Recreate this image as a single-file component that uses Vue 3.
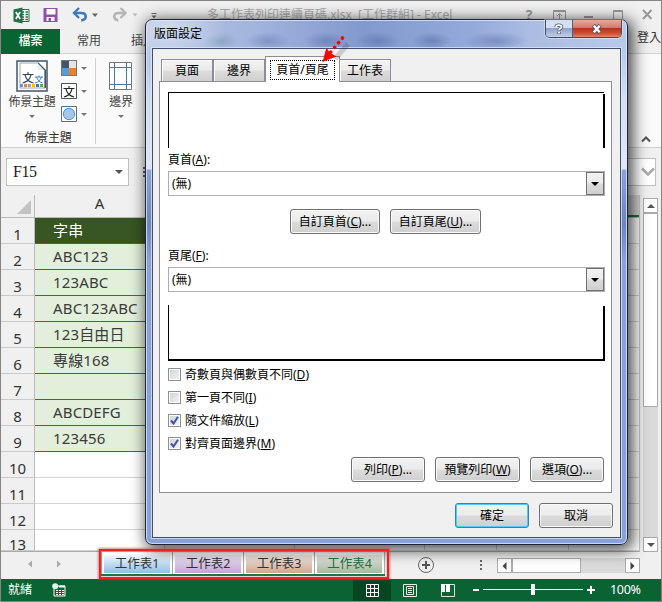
<script setup>
const rows = [
  { n: 1, text: '字串', kind: 'head' },
  { n: 2, text: 'ABC123', kind: 'data' },
  { n: 3, text: '123ABC', kind: 'data' },
  { n: 4, text: 'ABC123ABC', kind: 'data' },
  { n: 5, text: '123自由日', kind: 'data' },
  { n: 6, text: '專線168', kind: 'data' },
  { n: 7, text: '', kind: 'data' },
  { n: 8, text: 'ABCDEFG', kind: 'data' },
  { n: 9, text: '123456', kind: 'data' },
  { n: 10, text: '', kind: '' },
  { n: 11, text: '', kind: '' },
  { n: 12, text: '', kind: '' },
  { n: 13, text: '', kind: 'tail' },
]
const sheets = [
  { name: '工作表1', tone: 'blue' },
  { name: '工作表2', tone: 'purple' },
  { name: '工作表3', tone: 'orange' },
  { name: '工作表4', tone: 'green' },
]
const checks = [
  { label: '奇數頁與偶數頁不同', key: 'D', on: false },
  { label: '第一頁不同', key: 'I', on: false },
  { label: '隨文件縮放', key: 'L', on: true },
  { label: '對齊頁面邊界', key: 'M', on: true },
]
</script>

<template>
  <div class="excel">
    <header class="titlebar">
      <svg class="quick" width="150" height="28" viewBox="0 0 150 28">
        <path d="M16 8.500h9.500v12H16z" fill="#fff" stroke="#1e7145" />
        <path d="M18 11h2.500M22 11h2.500M18 13.500h2.500M22 13.500h2.500M18 16h2.500M22 16h2.500M18 18.500h2.500M22 18.500h2.500" stroke="#1e7145" stroke-width="1.300" />
        <path d="M10 8.500l9-2v16l-9-2z" fill="#1e7145" />
        <path d="M12.300 11l4.400 7M16.700 11l-4.400 7" stroke="#fff" stroke-width="1.600" />
        <path d="M40 7h14v14H40z" fill="#8d52a8" />
        <path d="M43 8h9v5.500h-9zM43 16h8v4h-8z" fill="#fff" />
        <path d="M45 17h2.500v3H45z" fill="#8d52a8" />
        <path d="M71 12h7c3 0 4.200 1.700 4.200 3.500 0 2.200-2 3.500-4.500 4" fill="none" stroke="#3f7ab8" stroke-width="2.600" />
        <path d="M75.500 7l-5 5 5 5" fill="none" stroke="#3f7ab8" stroke-width="2.400" />
        <path d="M88.500 12.500h6l-3 3.500z" fill="#666" />
        <path d="M121 12h-6c-3 0-4.200 1.700-4.200 3.500 0 2.200 1.700 3.500 4 4" fill="none" stroke="#b5b5b5" stroke-width="2.600" />
        <path d="M117 7l5 5-5 5" fill="none" stroke="#b5b5b5" stroke-width="2.400" />
        <path d="M129 12.500h5l-2.500 3z" fill="#bbb" />
        <path d="M148 12.500h5" stroke="#666" /><path d="M148 14.500h5l-2.500 3z" fill="#666" />
      </svg>
      <div class="doc">多工作表列印連續頁碼.xlsx&nbsp; [工作群組] - Excel</div>
      <div class="help">?</div>
      <svg class="controls" width="104" height="28" viewBox="0 0 104 28">
        <path d="M2.500 9.500h12v9h-12zM2 10.500h13M8.500 18v-5M6 15l2.500-2.500L11 15" fill="none" stroke="#999" />
        <path d="M33 15h9v2h-9z" fill="#999" />
        <path d="M62.500 9.500h9v9h-9zM62 10.500h10" fill="none" stroke="#999" />
        <path d="M92 9l8.500 9M100.500 9L92 18" stroke="#999" stroke-width="2" />
      </svg>
    </header>

    <nav class="tabs">
      <span class="file">檔案</span>
      <span class="tab home">常用</span>
      <span class="tab insert">插入</span>
      <span class="signin">登入</span>
    </nav>

    <section class="ribbon">
      <div class="group">
        <div class="tools">
          <div class="big themes">
            <svg width="32" height="32" viewBox="0 0 32 32">
              <path d="M1 1h30v30H1z" fill="#fff" stroke="#44546a" stroke-width="1.500" />
              <path d="M4 3h18l7 7v18H4z" fill="#fff" stroke="#9aa5b3" />
              <path d="M22 2l8 8v18h-1.500V10H22z" fill="#44546a" />
              <path d="M22 3.500V10h6z" fill="#e7ebf0" />
              <path d="M6.500 14.500h11M12 12v2.500M15 15c-1 4-4 7-8.500 8M9 15c1 4 4 7 8.500 8" fill="none" stroke="#34445a" stroke-width="1.100" />
              <path d="M19 17h8M23 15.500V17M25.500 17c-1 3-3 5-6.500 6M20.500 17c1 3 3 5 6 6" fill="none" stroke="#3e7dbb" />
              <path d="M4 24h3v3H4z" fill="#5b9bd5" /><path d="M8 24h3v3H8z" fill="#ed7d31" /><path d="M12 24h3v3h-3z" fill="#a5a5a5" /><path d="M16 24h3v3h-3z" fill="#ffc000" /><path d="M20 24h3v3h-3z" fill="#4472c4" /><path d="M24 24h3v3h-3z" fill="#70ad47" />
            </svg>
            <span class="cap">佈景主題</span>
            <i class="caret"></i>
          </div>
          <div class="minis">
            <div class="mini">
              <svg width="16" height="16" viewBox="0 0 16 16"><path d="M0 0h16v16H0z" fill="#777" /><path d="M1 1h7v7H1z" fill="#44546a" /><path d="M8 1h7v7H8z" fill="#e7e6e6" /><path d="M1 8h7v7H1z" fill="#5b9bd5" /><path d="M8 8h7v7H8z" fill="#ed7d31" /></svg>
              <i class="caret"></i>
            </div>
            <div class="mini">
              <svg width="16" height="16" viewBox="0 0 16 16"><path d="M.5.500h15v15H.5z" fill="#fff" stroke="#44546a" /><path d="M2.500 5.500h11M8 3v2.500M11 6c-1 4-4 7-8 8M5 6c1 4 4 7 8 8" fill="none" stroke="#222" stroke-width="1.100" /></svg>
              <i class="caret"></i>
            </div>
            <div class="mini">
              <svg width="16" height="16" viewBox="0 0 16 16"><path d="M.5.500h15v15H.5z" fill="#fff" stroke="#5a6b84" /><circle cx="8" cy="8" r="5.700" fill="#a5c5e9" stroke="#5b8fc9" /></svg>
              <i class="caret"></i>
            </div>
          </div>
        </div>
        <div class="group-name">佈景主題</div>
      </div>
      <div class="big margins">
        <svg width="24" height="29" viewBox="0 0 24 29"><path d="M.5.500h22v27H.5z" fill="#fff" stroke="#777" /><path d="M5.500 1v26M17.500 1v26M1 5.500h21M1 22.500h21" stroke="#3f7ab8" /></svg>
        <span class="cap">邊界</span>
        <i class="caret"></i>
      </div>
      <svg class="collapse" width="10" height="7" viewBox="0 0 10 7"><path d="M1 5.500l4-4 4 4" fill="none" stroke="#555" stroke-width="2" /></svg>
    </section>

    <section class="formula">
      <div class="namebox"><span>F15</span><i class="caret dark"></i></div>
      <div class="dots"><b></b><b></b><b></b></div>
      <div class="fx"><svg width="14" height="10" viewBox="0 0 14 10"><path d="M1 1.500l6 6 6-6" fill="none" stroke="#aaa" stroke-width="2.500" /></svg></div>
    </section>

    <main class="sheet">
      <div class="grid">
        <div class="colhead">
          <div class="corner"><svg width="14" height="14" viewBox="0 0 14 14"><path d="M14 0v14H0z" fill="#c3c3c3" /></svg></div>
          <div class="col-a">A</div>
          <div class="col-rest"></div>
        </div>
        <div v-for="r in rows" :key="r.n" class="row" :class="r.kind">
          <div class="num">{{ r.n }}</div>
          <div class="cell">{{ r.text }}</div>
          <div class="rest"></div><div class="rest"></div><div class="rest half"></div><div class="rest half"></div><div class="rest half"></div>
        </div>
      </div>
      <div class="vscroll">
        <div class="sbtn"><i class="caret up"></i></div>
        <div class="vthumb"></div>
        <div class="vtrack"></div>
        <div class="sbtn"><i class="caret dark"></i></div>
      </div>
    </main>

    <footer class="sheetbar">
      <svg class="arrows" width="98" height="26" viewBox="0 0 98 26"><path d="M31 8.500v7L27 12zM56 8.500v7l4-3.500z" fill="#aaa" /></svg>
      <div class="sheettabs">
        <div v-for="s in sheets" :key="s.name" class="stab" :class="s.tone"><span>{{ s.name }}</span></div>
      </div>
      <svg class="plus" width="18" height="18" viewBox="0 0 18 18"><circle cx="9" cy="9" r="7.500" fill="none" stroke="#666" /><path d="M5 9h8M9 5v8" stroke="#555" stroke-width="2" /></svg>
      <div class="dots sb"><b></b><b></b><b></b></div>
      <div class="hscroll">
        <div class="sbtn"><svg width="5" height="8" viewBox="0 0 5 8"><path d="M4.500 0v8L.5 4z" fill="#444" /></svg></div>
        <div class="hthumb"></div>
        <div class="htrack"></div>
        <div class="sbtn"><svg width="5" height="8" viewBox="0 0 5 8"><path d="M.5 0v8l4-4z" fill="#444" /></svg></div>
      </div>
    </footer>

    <footer class="status">
      <span class="ready">就緒</span>
      <svg class="macro" width="14" height="14" viewBox="0 0 14 14"><path d="M3 3h10v10H2V6" fill="none" stroke="#fff" /><circle cx="3.200" cy="3.200" r="3" fill="#e8f2ec" /><path d="M7 2.500h6v2H7z" fill="#fff" /><path d="M4 7.500h2M7 7.500h2M10 7.500h2M4 9.500h2M7 9.500h2M10 9.500h2M4 11.500h2M7 11.500h2M10 11.500h2" stroke="#fff" /></svg>
      <div class="view on"><svg width="13" height="13" viewBox="0 0 13 13"><path d="M.5.500h12v12H.5zM4.500 0v13M8.500 0v13M0 4.500h13M0 8.500h13" fill="none" stroke="#fff" /></svg></div>
      <div class="view page"><svg width="14" height="13" viewBox="0 0 14 13"><path d="M.5.500h13v12H.5zM3.500 2.500h7v8h-7zM5 4.500h4M5 6.500h4M5 8.500h4" fill="none" stroke="#e3efe8" /></svg></div>
      <div class="view brk"><svg width="14" height="13" viewBox="0 0 14 13"><path d="M.5.500h13v12H.5z" fill="none" stroke="#d5e6dc" /><path d="M0 0h4v8H0zM5 0h4v8H5z" fill="#fff" /><path d="M10.500 1v8" stroke="#0a6332" /></svg></div>
      <svg class="zoom" width="124" height="14" viewBox="0 0 124 14"><path d="M1 6h6v2H1zM115 6h8v2h-8zM118 3h2v8h-2z" fill="#fff" /><path d="M11 6.500h100" stroke="#fff" /><path d="M59 1h4v11h-4z" fill="#fff" /></svg>
      <span class="pct">100%</span>
    </footer>

    <div class="dialog">
      <div class="dlg-title">
        <span>版面設定</span>
        <div class="dlg-btns">
          <div class="qbtn"><svg width="10" height="12" viewBox="0 0 12 14"><path d="M2.500 4.500C2.500 1.500 9 1.500 9 4.500 9 6.500 6 6.500 6 9M6 10.500V13" fill="none" stroke="#4d5872" stroke-width="4" /><path d="M2.500 4.500C2.500 1.500 9 1.500 9 4.500 9 6.500 6 6.500 6 8.500M6 10.500V12.500" fill="none" stroke="#fff" stroke-width="2.200" /></svg></div>
          <div class="xbtn"><svg width="12" height="10" viewBox="0 0 13 11"><path d="M2.500 1.500l7.500 8M10 1.500l-7.500 8" stroke="#535666" stroke-width="4.600" /><path d="M3 2l6.500 7M9.500 2L3 9" stroke="#fff" stroke-width="2.600" /></svg></div>
        </div>
      </div>
      <div class="client">
        <div class="dtabs">
          <div class="dtab">頁面</div>
          <div class="dtab">邊界</div>
          <div class="dtab active"><span>頁首/頁尾</span></div>
          <div class="dtab last">工作表</div>
        </div>
        <div class="panel">
          <div class="preview top"></div>
          <div class="lbl">頁首(<u>A</u>):</div>
          <div class="combo"><span>(無)</span><div class="drop"><i class="caret black"></i></div></div>
          <div class="custom">
            <button class="w90">自訂頁首(<u>C</u>)...</button>
            <button class="w91">自訂頁尾(<u>U</u>)...</button>
          </div>
          <div class="lbl second">頁尾(<u>F</u>):</div>
          <div class="combo"><span>(無)</span><div class="drop"><i class="caret black"></i></div></div>
          <div class="preview bottom"></div>
          <div class="checks">
            <div v-for="c in checks" :key="c.key" class="check">
              <div class="box"><svg v-if="c.on" width="9" height="9" viewBox="0 0 9 9"><path d="M1 4.500l2.500 3L8 .8" fill="none" stroke="#3f539b" stroke-width="2" /></svg></div>
              <span>{{ c.label }}(<u>{{ c.key }}</u>)</span>
            </div>
          </div>
          <div class="actions">
            <button class="w74">列印(<u>P</u>)...</button>
            <button class="w85">預覽列印(<u>W</u>)</button>
            <button class="w74">選項(<u>O</u>)...</button>
          </div>
        </div>
        <div class="okrow">
          <button class="w74 ok">確定</button>
          <button class="w74">取消</button>
        </div>
      </div>
      <svg class="pointer" width="40" height="40" viewBox="0 0 40 40">
        <path d="M27 12L14 27" stroke="#333" stroke-opacity=".2" stroke-width="5" />
        <path d="M21.500 6L9 21" stroke="#f00" stroke-width="3.600" stroke-linecap="round" stroke-dasharray=".1 6" />
        <path d="M1.500 30L5.500 15.500 8.500 20.500 15.500 24.500z" fill="#f00" />
      </svg>
    </div>
    <div class="highlight"></div>
  </div>
</template>

<style>
body { margin: 0; overflow: hidden; }
</style>

<style scoped>
* { box-sizing: border-box; }
.excel { position: relative; width: 662px; height: 602px; overflow: hidden; display: flex; flex-direction: column; border: 1px solid #858585; background: #f0f0f0; font-family: "Noto Sans", "Noto Sans CJK TC", sans-serif; font-size: 12px; line-height: 16px; color: #444; white-space: nowrap; }
svg { display: block; flex: none; }
.caret { display: block; width: 0; height: 0; border: 3px solid transparent; border-top-color: #777; border-bottom: 0; }
.caret.dark { border-width: 4px 4px 0; border-top-color: #555; }
.caret.black { border-width: 4px 4px 0; border-top-color: #000; }
.caret.up { border-width: 0 4px 4px; border-bottom: 4px solid #555; }

.titlebar { display: flex; height: 28px; flex: none; }
.quick { width: 155px; overflow: visible; }
.doc { width: 246px; margin-left: 51px; padding-top: 4px; font-size: 12px; line-height: 20px; color: #aaa; }
.help { width: 12px; margin-left: 70px; padding-top: 4px; font-size: 14px; line-height: 20px; font-weight: 700; color: #999; text-align: center; }
.controls { margin-left: 16px; }

.tabs { display: flex; height: 25px; flex: none; border-bottom: 1px solid #d0d0d0; line-height: 24px; }
.file { width: 59px; height: 25px; background: #0a6332; color: #fff; text-align: center; font-weight: 500; }
.home { margin-left: 17px; width: 54px; }
.insert { width: 24px; }
.signin { margin-left: auto; line-height: 18px; width: 24px; color: #333; }

.ribbon { display: flex; height: 94px; flex: none; background: #fafafa; border-bottom: 1px solid #cfcfcf; padding-top: 4px; }
.group { width: 95px; height: 86px; border-right: 1px solid #cfcfcf; }
.tools { display: flex; height: 72px; }
.big { display: flex; flex-direction: column; align-items: center; }
.themes { width: 60px; padding: 2px 0 0 2px; }
.cap { margin-top: 2px; line-height: 16px; letter-spacing: -.3px; }
.big .caret { margin-top: 5px; }
.minis { padding-top: 2px; display: flex; flex-direction: column; gap: 7px; }
.mini { display: flex; align-items: center; gap: 4px; }
.group-name { line-height: 16px; text-align: center; letter-spacing: -.3px; color: #333; }
.margins { width: 50px; padding-top: 4px; }
.margins .cap { margin-top: 3px; }
.collapse { margin: 78px 10px 0 auto; }

.formula { display: flex; height: 47px; flex: none; padding: 10px 5px 0; }
.namebox { width: 123px; height: 28px; border: 1px solid #c0c0c0; background: #fff; display: flex; align-items: center; justify-content: space-between; padding: 0 5px 0 6px; font: 16px/28px "Liberation Serif", serif; letter-spacing: -.5px; color: #222; }
.dots { display: flex; flex-direction: column; gap: 2px; padding: 9px 0 0 14px; }
.dots b { width: 2px; height: 2px; background: #666; }
.fx { flex: 1; margin-left: 10px; height: 28px; border: 1px solid #c0c0c0; background: #fff; display: flex; justify-content: flex-end; align-items: center; }

.sheet { display: flex; height: 357px; flex: none; }
.grid { width: 639px; overflow: hidden; border-bottom: 1px solid #ababab; border-right: 1px solid #c6c6c6; background: #fff; }
.colhead { display: flex; height: 23px; background: #f0f0f0; border-bottom: 1px solid #b8b8b8; }
.corner { width: 34px; border-right: 1px solid #bbb; display: flex; justify-content: flex-end; align-items: flex-end; padding: 0 3px 3px 0; }
.col-a { width: 129px; text-align: center; font-size: 15px; line-height: 17px; color: #333; }
.col-rest { flex: 1; height: 22px; background: #d5d5d5; border-bottom: 2px solid #217346; }
.row { display: flex; height: 26px; }
.num { width: 34px; flex: none; background: #f0f0f0; border-right: 1px solid #bbb; border-bottom: 1px solid #cacaca; text-align: center; font-size: 15px; line-height: 32px; color: #333; }
.tail .num { line-height: 29px; }
.row.tail { height: 21px; }
.cell { width: 130px; flex: none; border-bottom: 1px solid #d4d4d4; border-right: 1px solid #d4d4d4; padding-left: 18px; font-size: 15px; line-height: 25px; letter-spacing: .15px; color: #3b3b3b; }
.data .cell { background: #e2efda; border-bottom-color: #0f6fb5; }
.head .cell { background: #375623; color: #fff; border-bottom-color: #0f6fb5; }
.rest { width: 130px; flex: none; border-bottom: 1px solid #d4d4d4; border-right: 1px solid #d4d4d4; }
.rest.half { width: 72px; }
.vscroll { width: 15px; margin-left: 3px; padding-top: 3px; display: flex; flex-direction: column; }
.sbtn { width: 15px; height: 15px; flex: none; border: 1px solid #ababab; background: #fff; display: flex; align-items: center; justify-content: center; }
.vthumb { height: 194px; border: 1px solid #ababab; background: #fff; }
.vtrack { flex: 1; background: #dadada; }

.sheetbar { display: flex; height: 27px; flex: none; }
.sheettabs { display: flex; width: 284px; margin-left: 2px; height: 24px; border-bottom: 2px solid #217346; background: #fff; }
.stab { width: 71px; padding: 3px 2px 1px; border-left: 1px solid #aaa; background: #fff; }
.stab:nth-child(4) { border-right: 1px solid #aaa; }
.stab span { display: block; height: 18px; line-height: 17px; text-align: center; font-size: 12.500px; color: #333; }
.blue span { background: linear-gradient(#f1f7fc, #8fc0e5); }
.purple span { background: linear-gradient(#f0eaf6, #c2a3d8); }
.orange span { background: linear-gradient(#f5ece6, #cda78e); }
.stab.green span { background: linear-gradient(#e9ebe6, #a6b79b); color: #217346; }
.arrows { width: 98px; }
.plus { margin: 4px 0 0 32px; }
.dots.sb { padding: 8px 0 0 45px; gap: 2px; }
.hscroll { display: flex; width: 143px; margin: 6px 0 0 15px; height: 15px; }
.hthumb { width: 69px; border: 1px solid #ababab; background: #fff; }
.htrack { flex: 1; background: #dadada; }

.status { display: flex; height: 22px; flex: none; background: #0a6332; color: #fff; line-height: 22px; align-items: center; }
.ready { margin-left: 7px; width: 44px; }
.view { height: 21px; display: flex; align-items: center; justify-content: center; width: 38px; }
.view.on { background: #084523; margin-left: 287px; }
.zoom { margin-left: 5px; }
.pct { margin-left: 14px; font-size: 12.500px; letter-spacing: -.3px; }

.dialog { position: absolute; left: 144px; top: 18px; width: 483px; height: 526px; border: 1px solid #1c2438; border-radius: 7px; background: radial-gradient(ellipse 60px 36px at 20px 10px, #d2dcf0, transparent), radial-gradient(ellipse 18px 8px at 75px 21px, rgba(80, 125, 140, .3), transparent), radial-gradient(ellipse 22px 9px at 122px 21px, rgba(60, 80, 140, .3), transparent), radial-gradient(ellipse 22px 9px at 180px 21px, rgba(60, 80, 140, .35), transparent), radial-gradient(ellipse 22px 9px at 232px 21px, rgba(60, 80, 140, .35), transparent), radial-gradient(ellipse 20px 9px at 286px 21px, rgba(60, 80, 140, .4), transparent), radial-gradient(ellipse 32px 9px at 350px 21px, rgba(60, 80, 140, .35), transparent), linear-gradient(to bottom, transparent 30px, rgba(235, 240, 250, .55) 80px, rgba(240, 244, 252, .7) 149px, #8ba3d7 150px, #6a86bc 205px, #8aa2d5 240px, #89a2d6), linear-gradient(to right, #b3c1df, #a3b5dd 22%, #8299ce 45%, #94aadb 68%, #abbde2 80%, #b8c9eb); box-shadow: inset 0 0 0 1px rgba(225, 235, 252, .75), 3px 3px 15px 2px rgba(0, 0, 0, .72); color: #000; padding: 0 6px 6px; }
.dlg-title { display: flex; justify-content: space-between; height: 28px; padding-left: 2px; line-height: 28px; }
.dlg-btns { display: flex; height: 18px; margin-right: -1px; border: 1px solid #414d69; border-top: 0; border-radius: 0 0 5px 5px; overflow: hidden; box-shadow: 0 0 0 1px rgba(255, 255, 255, .35); }
.qbtn, .xbtn { display: flex; align-items: center; justify-content: center; }
.qbtn { width: 27px; background: linear-gradient(#d4dff1 0 45%, #91a4c9 50%, #bfcee8); border-right: 1px solid #54617c; }
.xbtn { width: 48px; background: linear-gradient(#e6aa9f, #d37a6a 45%, #b92f1d 50%, #cf5236 80%, #df8667); }
.client { width: 469px; height: 490px; border: 1px solid #3f4e6e; background: #f0f0f0; padding: 8px 7px 0 6px; box-shadow: 0 0 0 1px rgba(225, 235, 252, .7); }
.dtabs { display: flex; align-items: flex-end; height: 24px; padding-left: 2px; }
.dtab { width: 52px; height: 22px; border: 1px solid #8b8c95; border-bottom: 0; background: linear-gradient(#f3f3f3, #ebebeb 48%, #dcdcdc 52%, #cfcfcf); text-align: center; line-height: 21px; box-shadow: inset 1px 1px #fbfbfb; }
.dtab.active { position: relative; z-index: 1; width: 75px; height: 26px; margin: 0 -1px -1px 0; background: #fff; padding: 3px 0 0 4px; display: flex; }
.active span { width: 65px; height: 20px; border: 1px dotted #000; line-height: 17px; text-align: center; }
.panel { width: 453px; height: 412px; border: 1px solid #8b8c95; background: #fff; padding: 10px 7px 0 8px; }
.preview { position: relative; width: 437px; height: 56px; border: 0 solid #000; }
.preview.top { border-width: 1px 0 0 1px; width: 436px; }
.preview.bottom { border-width: 0 0 0 1px; margin-top: 13px; }
.preview.top::after { content: ""; position: absolute; right: -1px; top: 1px; width: 2px; bottom: 0; background: #000; }
.preview.bottom::after { content: ""; position: absolute; right: 0; left: 0; top: 1px; bottom: 0; border: solid #000; border-width: 0 2px 2px 0; }
.lbl { height: 23px; line-height: 24px; }
.lbl.second { margin-top: 10px; }
.combo { width: 437px; height: 25px; border: 1px solid #abadb3; display: flex; justify-content: space-between; line-height: 23px; padding-left: 3px; }
.drop { width: 18px; height: 23px; border: 1px solid #707070; background: linear-gradient(#f2f2f2, #ebebeb 48%, #dcdcdc 52%, #cfcfcf); display: flex; align-items: center; justify-content: center; }
.custom { display: flex; gap: 10px; margin: 13px 0 0 122px; }
button { height: 25px; padding: 0; border: 1px solid #707070; border-radius: 3px; background: linear-gradient(#f2f2f2, #ebebeb 48%, #dcdcdc 52%, #cfcfcf); box-shadow: inset 0 0 0 1px #fafafa; font: inherit; color: #000; line-height: 22px; }
.w90 { width: 90px; }
.w91 { width: 91px; }
.w74 { width: 74px; }
.w85 { width: 85px; }
.checks { display: flex; flex-direction: column; gap: 10px; margin-top: 7px; }
.check { display: flex; height: 13px; gap: 4px; line-height: 13px; }
.box { width: 13px; height: 13px; border: 1px solid #8e8f8f; background: linear-gradient(135deg, #cdd1d6, #f5f5f5); box-shadow: inset 0 0 0 1px #fff; display: flex; align-items: center; justify-content: center; }
.actions { display: flex; gap: 10px; justify-content: flex-end; margin-top: 7px; }
.okrow { display: flex; gap: 10px; justify-content: flex-end; margin-top: 10px; }
.ok { border-color: #3c7fb1; box-shadow: inset 0 0 0 1px #48d0f5; }
.pointer { position: absolute; left: 175px; top: 12px; z-index: 3; }
.highlight { position: absolute; left: 98px; top: 548px; width: 290px; height: 30px; border: 2px solid #f02020; box-shadow: 0 0 2px 1px rgba(190, 60, 60, .6), inset 0 0 2px rgba(255, 60, 60, .6); }
</style>
